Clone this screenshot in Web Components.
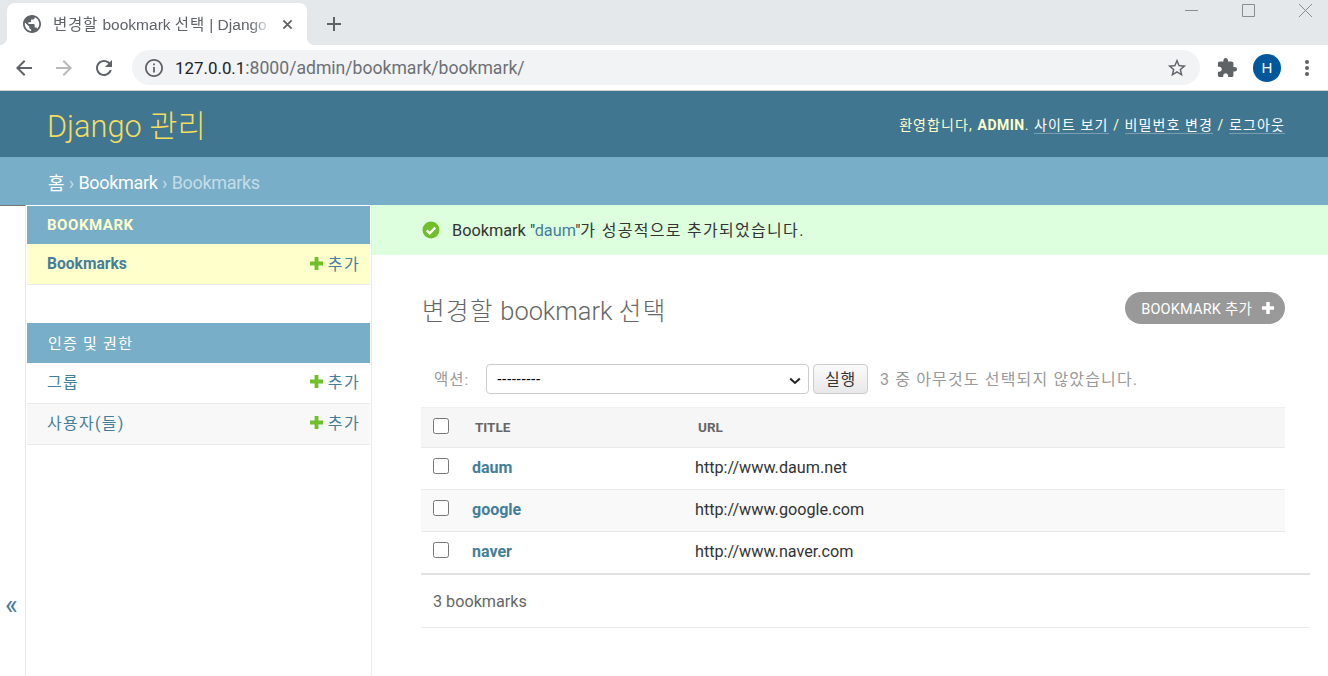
<!DOCTYPE html>
<html lang="ko">
<head>
<meta charset="utf-8">
<title>변경할 bookmark 선택 | Django 사이트 관리</title>
<style>
  html, body { margin: 0; height: 100%; background: #fff; }
  body {
    display: flex; flex-direction: column; height: 676px; overflow: hidden;
    font-family: Roboto, "Noto Sans CJK KR", sans-serif; color: #333;
  }
</style>
</head>
<body>

<browser-chrome title-text="변경할 bookmark 선택 | Django 사이트 관리" host-text="127.0.0.1" path-text=":8000/admin/bookmark/bookmark/"></browser-chrome>
<admin-header></admin-header>
<admin-crumbs></admin-crumbs>

<admin-layout>
  <admin-sidebar slot="side">
    <app-module caption="Bookmark" strong>
      <module-row current>Bookmarks</module-row>
    </app-module>
    <app-module caption="인증 및 권한">
      <module-row>그룹</module-row>
      <module-row alt>사용자(들)</module-row>
    </app-module>
  </admin-sidebar>
  <message-bar slot="main">Bookmark "<a>daum</a>"<span>가 성공적으로 추가되었습니다.</span></message-bar>
  <change-list slot="main"></change-list>
</admin-layout>

<template id="browser-chrome">
  <style>
    :host { display: block; flex: none; background: #fff; }
    svg { display: block; flex: none; }
    .strip { display: flex; align-items: flex-end; height: 45px; background: #e5e8eb; }
    .tab {
      position: relative; display: flex; align-items: center; box-sizing: border-box;
      width: 300px; height: 42px; margin-left: 7px; padding: 0 14px 0 16px;
      background: #fff; border-radius: 8px 8px 0 0;
    }
    .tab::before, .tab::after {
      content: ""; position: absolute; bottom: 0; width: 8px; height: 8px;
    }
    .tab::before { left: -8px; background: radial-gradient(circle at 0 0, #e5e8eb 8px, #fff 8.5px); }
    .tab::after { right: -8px; background: radial-gradient(circle at 100% 0, #e5e8eb 8px, #fff 8.5px); }
    .tab-title {
      flex: 1; margin: -2px 0 0 12px; overflow: hidden; white-space: nowrap;
      font: 15.5px "Liberation Sans", "Noto Sans CJK KR", sans-serif; color: #5f6368;
      -webkit-mask-image: linear-gradient(to right, #000 90%, transparent 100%);
      mask-image: linear-gradient(to right, #000 90%, transparent 100%);
    }
    .tab-title i { font-style: normal; font-size: 15.5px; letter-spacing: .8px; }
    .tab svg.x { margin: 0 0 0 10px; }
    .new-tab { margin: 0 0 14px 20px; }
    .win { margin-left: auto; display: flex; align-self: flex-start; }
    .win svg { margin-right: 16px; }
    .win svg:last-child { margin-right: 12px; }
    .tools { display: flex; align-items: center; height: 45px; border-bottom: 1px solid #cfd1d3; box-sizing: content-box; }
    .nav { display: flex; gap: 16px; margin-left: 12px; }
    .omni {
      display: flex; align-items: center; box-sizing: border-box;
      width: 1068px; height: 35px; margin-left: 16px; padding: 0 12px 0 13px;
      background: #f1f3f4; border-radius: 18px;
    }
    .url { flex: 1; margin-left: 12px; font: 17.6px Roboto, sans-serif; color: #6c7075; white-space: nowrap; }
    .url b { font-weight: 400; font-size: 16.9px; color: #202124; }
    .right { display: flex; align-items: center; margin-left: 17px; }
    .avatar {
      width: 28px; height: 28px; margin-left: 15px; border-radius: 50%;
      background: #01579b; color: #fff; font: 15px/28px "Liberation Sans", sans-serif; text-align: center;
    }
    .dots { margin-left: 14px; }
  </style>
  <div class="strip">
    <div class="tab">
      <svg width="18" height="18" viewBox="2 2 20 20" fill="#5f6368"><path d="M12 2C6.48 2 2 6.48 2 12s4.48 10 10 10 10-4.48 10-10S17.52 2 12 2zm-1 17.93c-3.95-.49-7-3.85-7-7.93 0-.62.08-1.21.21-1.79L9 15v1c0 1.1.9 2 2 2v1.93zm6.9-2.54c-.26-.81-1-1.39-1.9-1.39h-1v-3c0-.55-.45-1-1-1H8v-2h2c.55 0 1-.45 1-1V7h2c1.1 0 2-.9 2-2v-.41c2.93 1.19 5 4.06 5 7.41 0 2.08-.8 3.97-2.1 5.39z"/></svg>
      <span class="tab-title" id="title"></span>
      <svg class="x" width="11" height="11" viewBox="0 0 12 12" stroke="#5f6368" stroke-width="2"><path d="M1.5 1.5l9 9M10.5 1.5l-9 9"/></svg>
    </div>
    <svg class="new-tab" width="14" height="14" viewBox="0 0 14 14" fill="#5f6368"><path d="M6 0h2v6h6v2H8v6H6V8H0V6h6z"/></svg>
    <div class="win">
      <svg width="41" height="20" viewBox="0 0 41 20" stroke="#8a8d90" fill="none"><path d="M12 10.5h13"/></svg>
      <svg width="41" height="20" viewBox="0 0 41 20" stroke="#8a8d90" fill="none"><path d="M12.5 4.5h12v12h-12z"/></svg>
      <svg width="29" height="20" viewBox="0 0 29 20" stroke="#8a8d90" fill="none"><path d="M12 4l13 13M25 4L12 17"/></svg>
    </div>
  </div>
  <div class="tools">
    <div class="nav">
      <svg width="24" height="24" viewBox="0 0 24 24" fill="#5f6368"><path d="M20 11H7.83l5.59-5.59L12 4l-8 8 8 8 1.41-1.41L7.83 13H20v-2z"/></svg>
      <svg width="24" height="24" viewBox="0 0 24 24" fill="#b8babc"><path d="M4 11h12.17l-5.59-5.59L12 4l8 8-8 8-1.41-1.41L16.17 13H4v-2z"/></svg>
      <svg width="24" height="24" viewBox="0 0 24 24" fill="#5f6368"><path d="M17.65 6.35C16.2 4.9 14.21 4 12 4c-4.42 0-7.99 3.58-7.99 8s3.57 8 7.99 8c3.73 0 6.84-2.55 7.73-6h-2.08c-.82 2.33-3.04 4-5.65 4-3.31 0-6-2.69-6-6s2.69-6 6-6c1.66 0 3.14.69 4.22 1.78L13 11h7V4l-2.35 2.35z"/></svg>
    </div>
    <div class="omni">
      <svg width="18" height="18" viewBox="2 2 20 20" fill="#5f6368"><path d="M11 7h2v2h-2zm0 4h2v6h-2zm1-9C6.48 2 2 6.48 2 12s4.48 10 10 10 10-4.48 10-10S17.52 2 12 2zm0 18c-4.41 0-8-3.59-8-8s3.59-8 8-8 8 3.59 8 8-3.59 8-8 8z"/></svg>
      <span class="url"><b id="host"></b><span id="path"></span></span>
      <svg width="22" height="22" viewBox="0 0 24 24" fill="#5f6368"><path d="M22 9.24l-7.19-.62L12 2 9.19 8.63 2 9.24l5.46 4.73L5.82 21 12 17.27 18.18 21l-1.63-7.03L22 9.24zM12 15.4l-3.76 2.27 1-4.28-3.32-2.88 4.38-.38L12 6.1l1.71 4.04 4.38.38-3.32 2.88 1 4.28L12 15.4z"/></svg>
    </div>
    <div class="right">
      <svg width="21" height="21" viewBox="1 0 23 23" fill="#5f6368"><path d="M20.5 11H19V7c0-1.1-.9-2-2-2h-4V3.5C13 2.12 11.88 1 10.5 1S8 2.12 8 3.5V5H4c-1.1 0-1.99.9-1.99 2v3.8H3.5c1.49 0 2.7 1.21 2.7 2.7s-1.21 2.7-2.7 2.7H2V20c0 1.1.9 2 2 2h3.8v-1.5c0-1.49 1.21-2.7 2.7-2.7 1.49 0 2.7 1.21 2.7 2.7V22H17c1.1 0 2-.9 2-2v-4h1.5c1.38 0 2.5-1.12 2.5-2.5S21.88 11 20.5 11z"/></svg>
      <div class="avatar">H</div>
      <svg class="dots" width="24" height="24" viewBox="0 0 24 24" fill="#5f6368"><circle cx="12" cy="6" r="2"/><circle cx="12" cy="12" r="2"/><circle cx="12" cy="18" r="2"/></svg>
    </div>
  </div>
</template>

<template id="admin-header">
  <style>
    :host {
      display: flex; flex: none; align-items: center; justify-content: space-between; box-sizing: border-box;
      height: 66px; padding: 0 43px 1px 47px; background: #417690; color: #ffc;
    }
    h1 { margin: 0; font-size: 30.7px; font-weight: 300; color: #f5dd5d; }
    .tools { font-size: 14px; letter-spacing: 1.1px; white-space: nowrap; }
    b { font-weight: 700; letter-spacing: .5px; }
    a { color: #fff; border-bottom: 1px solid rgba(255,255,255,.3); }
  </style>
  <h1>Django 관리</h1>
  <div class="tools">환영합니다, <b>ADMIN</b>. <a>사이트 보기</a> / <a>비밀번호 변경</a> / <a>로그아웃</a></div>
</template>

<template id="admin-crumbs">
  <style>
    :host {
      display: flex; flex: none; align-items: center; box-sizing: border-box;
      height: 48px; padding: 2px 0 0 48px; background: #79aec8; color: #c4dce8; font-size: 18px; letter-spacing: -.32px;
      word-spacing: .4px; white-space: pre;
    }
    a { color: #fff; }
  </style>
  <a>홈</a> › <a>Bookmark</a> › Bookmarks
</template>

<template id="admin-layout">
  <style>
    :host { display: flex; flex: 1; min-height: 0; }
    .toggle {
      flex: none; box-sizing: border-box; width: 26px; padding: 383px 0 0 5px;
      border-top: 1px solid #777; border-right: 1px solid #eaeaea;
      color: #447e9b; font-size: 27px; line-height: 32px;
    }
    .side { flex: none; display: block; }
    .main { flex: 1; min-width: 0; }
  </style>
  <div class="toggle">«</div>
  <div class="side"><slot name="side"></slot></div>
  <div class="main"><slot name="main"></slot></div>
</template>

<template id="admin-sidebar">
  <style>
    :host {
      display: flex; flex-direction: column; gap: 38px; box-sizing: border-box;
      width: 346px; height: 471px; padding: 1px 1px 0 1px; border-right: 1px solid #eaeaea;
    }
  </style>
  <slot></slot>
</template>

<template id="app-module">
  <style>
    :host { display: block; }
    .cap {
      display: flex; align-items: center; box-sizing: border-box; height: 40px; padding: 0 0 2px 21px;
      background: #79aec8; color: #fff; font-size: 15px; letter-spacing: 1.25px;
    }
    :host([strong]) .cap { height: 38px; padding: 0 0 0 20px; color: #ffc; font-weight: 700; text-transform: uppercase; letter-spacing: .55px; font-size: 15px; }
  </style>
  <div class="cap" id="cap"></div>
  <slot></slot>
</template>

<template id="module-row">
  <style>
    :host {
      display: flex; align-items: center; justify-content: space-between; box-sizing: border-box;
      height: 41px; padding: 0 9.6px 5px 20px; border-bottom: 1px solid #eaeaea;
      color: #447e9b; font-size: 16px; letter-spacing: 1.3px;
    }
    :host([alt]) { background: #f8f8f8; }
    :host([current]) { background: #ffc; padding-bottom: 3px; }
    :host([current]) .label { margin-top: 2px; font-size: 15.6px; font-weight: 700; letter-spacing: 0; }
    .add { display: flex; align-items: center; gap: 5px; font-size: 16px; font-weight: 400; letter-spacing: 1.6px; }
    .add svg { margin-top: 1px; }
    svg { display: block; }
  </style>
  <span class="label"><slot></slot></span>
  <span class="add">
    <svg width="13" height="13" viewBox="0 0 13 13" fill="#70bf2b"><path d="M4.6 0h3.8v4.6H13v3.8H8.4V13H4.6V8.4H0V4.6h4.6z"/></svg>추가
  </span>
</template>

<template id="message-bar">
  <style>
    :host {
      display: flex; align-items: center; gap: 12px; box-sizing: border-box;
      height: 50px; padding: 0 0 3px 50px; background: #dfd; color: #333; font-size: 16.3px;
    }
    ::slotted(a) { color: #447e9b; }
    ::slotted(span) { font-size: 16px; letter-spacing: 1.3px; }
    svg { display: block; flex: none; margin-top: 2px; }
  </style>
  <svg width="18" height="18" viewBox="0 0 18 18"><circle cx="9" cy="9" r="8.5" fill="#70bf2b"/><path d="M4.8 9.3l3 3 5.4-5.6" fill="none" stroke="#fff" stroke-width="2.4"/></svg>
  <span><slot></slot></span>
</template>

<template id="change-list">
  <style>
    :host { display: block; padding: 34px 18px 0 49px; color: #333; font-size: 15px; }
    .head { display: flex; align-items: center; justify-content: space-between; width: 864px; height: 38px; }
    h1 { margin: 2px 0 0 1px; font-size: 25.4px; font-weight: 300; color: #666; }
    h1 i { font-style: normal; font-size: 24.5px; letter-spacing: 1.5px; }
    .addbtn {
      display: flex; align-items: center; gap: 10px; box-sizing: border-box; height: 32px; padding: 0 11px 2px 16px;
      background: #999; border-radius: 16px; color: #fff; font-size: 14.5px; letter-spacing: .2px;
    }
    .addbtn svg { margin-top: 2px; }
    .actions { display: flex; align-items: center; height: 30px; margin-top: 37px; width: 864px; color: #999; font-size: 16px; letter-spacing: 1.15px; }
    .actions label { margin: -3px 0 0 13px; width: 52px; font-size: 15.5px; letter-spacing: 1px; }
    .actions > span { margin-top: -3px; }
    .pick { position: relative; display: block; width: 323px; height: 30px; }
    .pick svg { position: absolute; right: 8px; top: 13px; pointer-events: none; }
    select {
      display: block; box-sizing: border-box; width: 100%; height: 30px; padding: 0 10px; background: #fff;
      -webkit-appearance: none; appearance: none; letter-spacing: 0;
      border: 1px solid #ccc; border-radius: 4px; color: #000; font: 14.5px "Liberation Sans", sans-serif;
    }
    button {
      box-sizing: border-box; width: 55px; height: 30px; margin: 0 12px 0 4px; padding: 0 0 2px;
      border: 1px solid #ccc; border-radius: 4px; background: linear-gradient(#fafafa, #e8e8e8);
      color: #333; font: 16px Roboto, "Noto Sans CJK KR", sans-serif; letter-spacing: .8px;
    }
    table { border-collapse: collapse; width: 864px; margin-top: 13px; table-layout: fixed; }
    th {
      height: 40px; padding: 0 0 2px; background: #f6f6f6; border-top: 1px solid #eee; border-bottom: 1px solid #eaeaea;
      text-align: left; font-size: 13.5px; font-weight: 700; color: #666; box-sizing: border-box;
    }
    th span { padding-left: 3px; }
    td { height: 42px; padding: 0 0 2px; box-sizing: border-box; border-bottom: 1px solid #eaeaea; font-size: 16.2px; color: #333; }
    tr.alt td { background: #f9f9f9; }
    td a { color: #447e9b; font-weight: 700; font-size: 16px; }
    input[type=checkbox] { display: block; width: 16px; height: 16px; margin: 0 0 0 12px; position: relative; top: -2px; }
    th input[type=checkbox] { top: -1px; }
    .c1 { width: 51px; } .c2 { width: 223px; }
    .foot {
      box-sizing: border-box; height: 55px; line-height: 54px; padding-left: 12px; width: 889px; margin-top: -1px;
      border-top: 2px solid #e2e2e2; border-bottom: 1px solid #eaeaea; color: #666; font-size: 16.2px;
    }
  </style>
  <div class="head">
    <h1><i>변경할</i> bookmark <i>선택</i></h1>
    <a class="addbtn">BOOKMARK 추가
      <svg width="12" height="12" viewBox="0 0 13 13" fill="#fff"><path d="M4.6 0h3.8v4.6H13v3.8H8.4V13H4.6V8.4H0V4.6h4.6z"/></svg>
    </a>
  </div>
  <div class="actions">
    <label>액션:</label>
    <div class="pick">
      <select><option>---------</option></select>
      <svg width="12" height="8" viewBox="0 0 12 8" fill="none" stroke="#222" stroke-width="2"><path d="M1.2 1.5L6 6l4.8-4.5"/></svg>
    </div>
    <button>실행</button>
    <span>3 중 아무것도 선택되지 않았습니다.</span>
  </div>
  <table>
    <colgroup><col class="c1"><col class="c2"><col></colgroup>
    <tr><th><input type="checkbox"></th><th><span>TITLE</span></th><th><span>URL</span></th></tr>
    <tr><td><input type="checkbox"></td><td><a>daum</a></td><td>http://www.daum.net</td></tr>
    <tr class="alt"><td><input type="checkbox"></td><td><a>google</a></td><td>http://www.google.com</td></tr>
    <tr><td><input type="checkbox"></td><td><a>naver</a></td><td>http://www.naver.com</td></tr>
  </table>
  <div class="foot">3 bookmarks</div>
</template>

<script>
  // every element just clones its template of the same name
  class TemplateElement extends HTMLElement {
    constructor() {
      super();
      const root = this.attachShadow({ mode: "open" });
      root.appendChild(document.getElementById(this.localName).content.cloneNode(true));
    }
  }

  class BrowserChrome extends TemplateElement {
    connectedCallback() {
      // hangul runs wider than latin in the tab title
      this.shadowRoot.getElementById("title").innerHTML =
        this.getAttribute("title-text").replace(/[가-힣]+/g, "<i>$&</i>");
      this.shadowRoot.getElementById("host").textContent = this.getAttribute("host-text");
      this.shadowRoot.getElementById("path").textContent = this.getAttribute("path-text");
    }
  }

  class AppModule extends TemplateElement {
    connectedCallback() {
      this.shadowRoot.getElementById("cap").textContent = this.getAttribute("caption");
    }
  }

  customElements.define("browser-chrome", BrowserChrome);
  customElements.define("app-module", AppModule);
  for (const name of ["admin-header", "admin-crumbs", "admin-layout", "admin-sidebar", "module-row", "message-bar", "change-list"]) {
    customElements.define(name, class extends TemplateElement {});
  }
</script>
</body>
</html>
